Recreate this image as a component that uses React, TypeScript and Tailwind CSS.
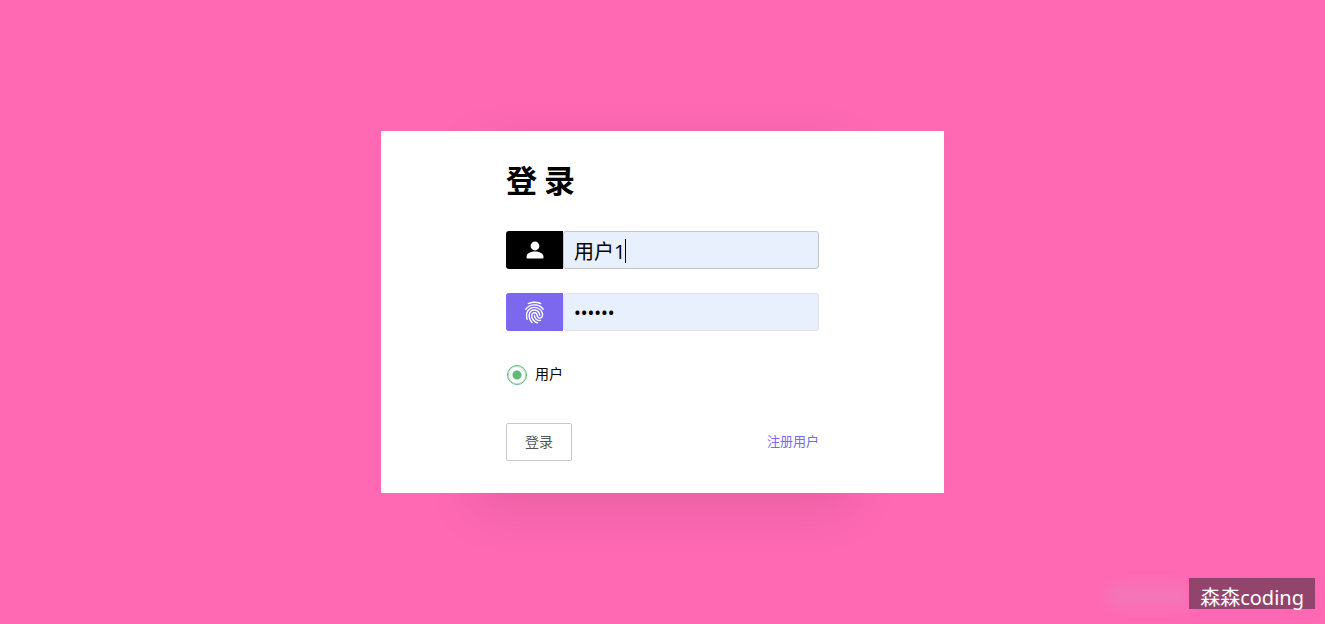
import { useState } from "react";
import { IoMdFingerPrint } from "react-icons/io";

function PersonIcon() {
  return (
    <svg width="18" height="18" viewBox="0 0 18 18" fill="currentColor" role="img" aria-label="用户名">
      <circle cx="9" cy="5" r="4.4" />
      <path d="M9 10.6c-4.6 0-8.5 2-8.5 5.2v1c0 .5.3.8.8.8h15.4c.5 0 .8-.3.8-.8v-1c0-3.2-3.9-5.2-8.5-5.2z" />
    </svg>
  );
}

export default function App() {
  const [name, setName] = useState("用户1");
  const [password, setPassword] = useState("123456");

  return (
    <div className="relative flex min-h-screen items-center justify-center overflow-hidden bg-[#ff69b4] font-['Noto_Sans','Noto_Sans_CJK_SC',sans-serif] text-black">
      <main className="relative isolate w-full max-w-[563px]">
        <div
          aria-hidden="true"
          className="absolute inset-y-0 left-1/2 -z-10 w-[376px] -translate-x-1/2 shadow-[0_16px_48px_rgba(0,0,0,0.1)]"
        />
        <form className="flex justify-center bg-white px-6 pt-7 pb-8" onSubmit={(e) => e.preventDefault()}>
          <div className="w-full max-w-[313px]">
            <h1 className="font-['Noto_Sans_CJK_SC',sans-serif] text-[31px] leading-10 font-bold">登 录</h1>

            <div className="mt-8 flex h-[38px]">
              <label htmlFor="name" className="flex w-[57px] shrink-0 items-center justify-center rounded-l-[3px] bg-black text-white">
                <PersonIcon />
              </label>
              <div className="relative min-w-0 flex-1">
                <input
                  id="name"
                  type="text"
                  value={name}
                  onChange={(e) => setName(e.target.value)}
                  className="h-full w-full rounded-[3px] border border-[#c6c6c6] bg-[#e8f0fe] px-2.5 font-['Open_Sans','Noto_Sans_CJK_SC',sans-serif] text-xl outline-none"
                />
                <span aria-hidden="true" className="absolute top-2 left-[62px] h-6 w-px bg-black" />
              </div>
            </div>

            <div className="mt-6 flex h-[38px]">
              <label htmlFor="password" className="flex w-[57px] shrink-0 items-center justify-center rounded-l-[3px] bg-[#7b68ee] text-white">
                <IoMdFingerPrint size={25} aria-label="密码" />
              </label>
              <input
                id="password"
                type="password"
                value={password}
                onChange={(e) => setPassword(e.target.value)}
                className="min-w-0 flex-1 rounded-[3px] border border-[#e2e2e2] bg-[#e8f0fe] px-2.5 text-lg outline-none"
              />
            </div>

            <label className="mt-8 flex h-6 items-center gap-2 font-['Noto_Sans_CJK_SC',sans-serif] text-sm">
              <input
                type="radio"
                name="role"
                defaultChecked
                className="ml-px size-5 appearance-none rounded-full border border-[#5fb878] inset-ring inset-ring-[#5fb878]/40 checked:bg-[radial-gradient(circle,#5fb878_4px,transparent_5px)]"
              />
              <span className="pb-1">用户</span>
            </label>

            <div className="mt-9 flex items-center justify-between font-['Noto_Sans_CJK_SC',sans-serif]">
              <button type="submit" className="h-[38px] rounded-[2px] border border-[#c9c9c9] bg-white px-[18px] pb-0.5 text-sm text-[#555]">
                登录
              </button>
              <a href="#register" className="pb-0.5 text-[13px] text-[#7b68ee]">
                注册用户
              </a>
            </div>
          </div>
        </form>
      </main>

      <div className="absolute right-2.5 bottom-[15px] flex items-center">
        <span aria-hidden="true" className="absolute top-2 right-full h-5 w-20 bg-[#e58abd]/50 blur-[8px]" />
        <span className="relative h-[31px] bg-[#93446d] px-[11px] text-xl leading-10 text-white">森森coding</span>
      </div>
    </div>
  );
}
